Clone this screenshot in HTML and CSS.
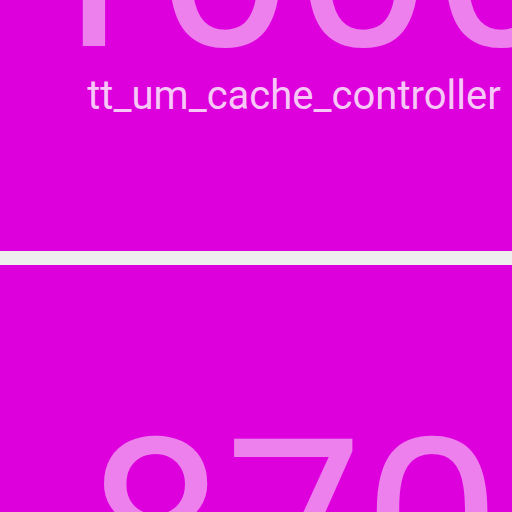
FILE: index.html
```html
<!DOCTYPE html>
<html>
<head>
<meta charset="utf-8">
<link rel="stylesheet" href="styles.css">
</head>
<body>
<main class="feed">
  <section class="card">
    <div class="count">1000</div>
    <div class="name">tt_um_cache_controller</div>
  </section>
  <section class="card">
    <div class="count">870</div>
    <div class="name">tt_um_example</div>
  </section>
</main>
</body>
</html>
```

FILE: styles.css
```css
html, body {
  margin: 0;
  padding: 0;
  background: #eeeeee;
  overflow: hidden;
  height: 512px;
}

.feed {
  display: flex;
  flex-direction: column;
  gap: 14px;
  width: 588px;
  margin-top: -303px;
  font-family: Roboto, "Noto Sans", sans-serif;
}

.card {
  background: #dd00dd;
  display: flex;
  flex-direction: column;
  align-items: center;
  padding: 156px 0 132px;
  overflow: hidden;
}

.count {
  font-size: 246px;
  line-height: 218px;
  color: rgba(255, 255, 255, 0.5);
  white-space: nowrap;
}

.name {
  margin-top: 2px;
  font-size: 40px;
  line-height: 46px;
  color: rgba(255, 255, 255, 0.78);
  white-space: nowrap;
}
```
